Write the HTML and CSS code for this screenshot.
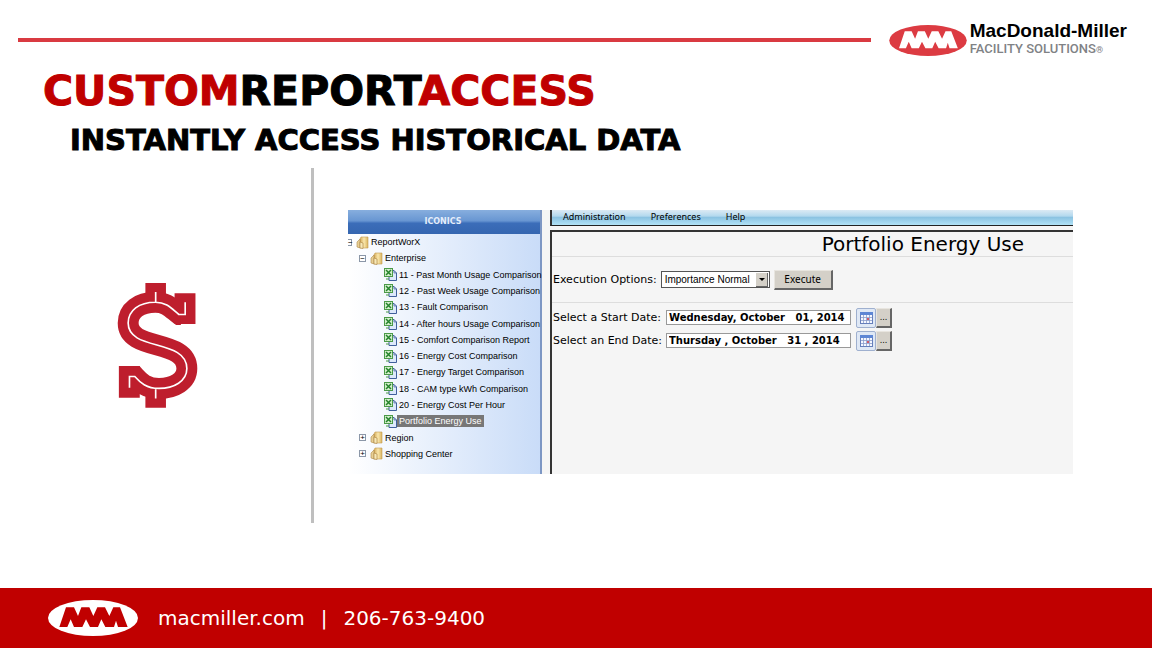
FILE: index.html
```
<!DOCTYPE html>
<html lang="en">
<head>
  <meta charset="UTF-8">
  <meta name="viewport" content="width=device-width, initial-scale=1.0">
  <title>Custom Report Access</title>
  <link rel="stylesheet" href="styles.css">
</head>
<body>
  <!-- Shared icons -->
  <svg class="sprite" aria-hidden="true">
    <defs>
      <linearGradient id="folderFill" x1="0" x2="1">
        <stop offset="0" stop-color="#d2a958"/>
        <stop offset="0.5" stop-color="#fae7ac"/>
        <stop offset="1" stop-color="#d9b45f"/>
      </linearGradient>
    </defs>
    <symbol id="mmm" viewBox="0 0 270 108">
      <ellipse cx="135" cy="54" rx="135" ry="54" fill="currentColor"/>
      <path class="zigzag" d="M34 81L54 22H78L90 48L100 22H124L136 48L148 22H171L184 48L196 22H216L239 81H210L204 62L198 81H172L160 58L150 81H126L114 58L103 81H78L68 58L58 81Z"/>
    </symbol>
    <symbol id="folder" viewBox="0 0 13 13">
      <path d="M5 1H12V12H4V3Z" fill="url(#folderFill)" stroke="#c49b50" stroke-width="0.6"/>
      <path d="M1 6L4 3V12L1 11Z" fill="#e7cf94" stroke="#b08b4a" stroke-width="0.6"/>
      <path d="M4 6L7 7V12.5L4 12Z" fill="#f7e8b8" stroke="#a9823d" stroke-width="0.6"/>
    </symbol>
    <symbol id="sheet" viewBox="0 0 13 13">
      <path d="M5 2.5H10L12.5 5V12.5H5Z" fill="#dce8fb" stroke="#3f5f9c"/>
      <path d="M10 2.5V5H12.5" fill="none" stroke="#3f5f9c" stroke-width="0.7"/>
      <rect x="0.5" y="0.5" width="8" height="8" fill="#d3efcc" stroke="#4b9a48"/>
      <path d="M2 2L7 7M7 2L2 7" stroke="#24832b" stroke-width="1.5"/>
      <path d="M2 11H5" stroke="#4b9a48"/>
    </symbol>
    <symbol id="calendar" viewBox="0 0 13 12">
      <rect x="0.5" y="0.5" width="12" height="11" fill="#f4f7ff" stroke="#667fbb"/>
      <path d="M0 0H13V3H0Z" fill="#5e86d4"/>
      <path d="M1 5.5H12M1 8.5H12M3.5 3V11M6.5 3V11M9.5 3V11" stroke="#8b9dcc" stroke-width="0.8"/>
      <path d="M7 6H9V8H7Z" fill="#d35a68"/>
    </symbol>
  </svg>

  <header class="top">
    <div class="rule"></div>
    <div class="brand">
      <svg class="brand-mark"><use href="#mmm"/></svg>
      <div>
        <div class="brand-name">MacDonald-Miller</div>
        <div class="brand-sub">FACILITY SOLUTIONS<span class="reg">®</span></div>
      </div>
    </div>
  </header>

  <main>
    <h1><span>CUSTOM</span>REPORT<span>ACCESS</span></h1>
    <h2>INSTANTLY ACCESS HISTORICAL DATA</h2>

    <div class="content">
      <div class="symbol">
        <svg class="dollar" viewBox="52 38 243 377" role="img" aria-label="Dollar">
          <path d="M137 38H199V85H137ZM137 370H199V414H137ZM225 69H288V162H225ZM57 288H120V384H57Z" fill="#be1e2d"/>
          <path d="M244 133H240C217 116 202 96 167 96C118 96 85 121 85 159C85 245 262 205 262 296C262 334 223 356 178 356C140 356 121 338 105 320H100" fill="none" stroke="#be1e2d" stroke-width="63"/>
          <path d="M168 65V96M168 356V386M257 96V133H238C217 116 202 96 167 96C118 96 85 121 85 159C85 245 262 205 262 296C262 334 223 356 178 356C140 356 121 338 105 320H89V354" fill="none" stroke="#fff" stroke-width="5"/>
        </svg>
      </div>

      <div class="report">
        <nav class="sidebar">
          <div class="sidebar-head">ICONICS</div>
          <ul class="tree">
            <li class="root"><button class="toggle" aria-label="Collapse">−</button><svg><use href="#folder"/></svg>ReportWorX</li>
            <li class="group"><button class="toggle" aria-label="Collapse">−</button><svg><use href="#folder"/></svg>Enterprise</li>
            <li class="leaf"><svg><use href="#sheet"/></svg><a href="#">11 - Past Month Usage Comparison</a></li>
            <li class="leaf"><svg><use href="#sheet"/></svg><a href="#">12 - Past Week Usage Comparison</a></li>
            <li class="leaf"><svg><use href="#sheet"/></svg><a href="#">13 - Fault Comparison</a></li>
            <li class="leaf"><svg><use href="#sheet"/></svg><a href="#">14 - After hours Usage Comparison</a></li>
            <li class="leaf"><svg><use href="#sheet"/></svg><a href="#">15 - Comfort Comparison Report</a></li>
            <li class="leaf"><svg><use href="#sheet"/></svg><a href="#">16 - Energy Cost Comparison</a></li>
            <li class="leaf"><svg><use href="#sheet"/></svg><a href="#">17 - Energy Target Comparison</a></li>
            <li class="leaf"><svg><use href="#sheet"/></svg><a href="#">18 - CAM type kWh Comparison</a></li>
            <li class="leaf"><svg><use href="#sheet"/></svg><a href="#">20 - Energy Cost Per Hour</a></li>
            <li class="leaf"><svg><use href="#sheet"/></svg><a href="#" class="selected">Portfolio Energy Use</a></li>
            <li class="group"><button class="toggle" aria-label="Expand">+</button><svg><use href="#folder"/></svg>Region</li>
            <li class="group"><button class="toggle" aria-label="Expand">+</button><svg><use href="#folder"/></svg>Shopping Center</li>
          </ul>
        </nav>

        <div class="workspace">
          <nav class="menu">
            <a href="#">Administration</a>
            <a href="#">Preferences</a>
            <a href="#">Help</a>
          </nav>
          <form class="panel">
            <h3>Portfolio Energy Use</h3>
            <div class="row options">
              <label for="priority">Execution Options:</label>
              <span class="select-box">
                <select id="priority"><option>Importance Normal</option></select>
              </span>
              <button type="button" class="execute">Execute</button>
            </div>
            <div class="dates">
              <div class="row">
                <label for="start">Select a Start Date:</label>
                <input type="text" id="start" value="Wednesday, October   01, 2014">
                <div class="pickers">
                  <button type="button" class="pick" aria-label="Open calendar"><svg><use href="#calendar"/></svg></button>
                  <button type="button" class="more">...</button>
                </div>
              </div>
              <div class="row">
                <label for="end">Select an End Date:</label>
                <input type="text" id="end" value="Thursday , October   31 , 2014">
                <div class="pickers">
                  <button type="button" class="pick" aria-label="Open calendar"><svg><use href="#calendar"/></svg></button>
                  <button type="button" class="more">...</button>
                </div>
              </div>
            </div>
          </form>
        </div>
      </div>
    </div>
  </main>

  <footer>
    <svg class="footer-mark"><use href="#mmm"/></svg>
    <a href="#">macmiller.com</a>
    <span>|</span>
    <span>206-763-9400</span>
  </footer>
</body>
</html>
```
FILE: styles.css
```
* {
  box-sizing: border-box;
}
body {
  margin: 0;
  min-height: 100vh;
  display: flex;
  flex-direction: column;
  background: #fff;
  color: #000;
  font-family: "Liberation Sans", Arial, sans-serif;
}
a {
  color: inherit;
  text-decoration: none;
}
button, input, select {
  margin: 0;
  font-family: inherit;
}
.sprite {
  position: absolute;
  width: 0;
  height: 0;
}

/* Header */
.top {
  display: flex;
  align-items: center;
  gap: 18px;
  padding: 20px 25px 0 18px;
}
.rule {
  flex: 1;
  height: 4px;
  background: #d93a41;
}
.brand {
  display: flex;
  align-items: center;
  gap: 3px;
  height: 40px;
}
.brand-mark {
  width: 78px;
  height: 31px;
  color: #dc3b42;
  fill: #fff;
}
.brand-name {
  font-size: 19px;
  line-height: 18px;
  font-weight: bold;
}
.brand-sub {
  font-family: Roboto, sans-serif;
  font-size: 13px;
  line-height: 18px;
  font-weight: 500;
  color: #808285;
}
.reg {
  font-size: 9px;
}

/* Titles */
main {
  flex: 1;
}
h1, h2 {
  margin: 0;
  font-family: "DejaVu Sans", sans-serif;
  font-weight: bold;
  -webkit-text-stroke: 1px currentColor;
}
h1 {
  padding: 10px 0 0 43px;
  font-size: 41px;
  line-height: 42px;
}
h1 span {
  color: #c00000;
}
h2 {
  padding: 12px 0 0 70px;
  font-size: 29px;
  line-height: 32px;
}

/* Content */
.content {
  display: flex;
  align-items: stretch;
  margin-top: 12px;
  min-height: 355px;
}
.symbol {
  flex: 0 0 314px;
  display: flex;
  align-items: center;
  justify-content: center;
  padding-left: 4px;
  border-right: 3px solid #bfbfbf;
}
.dollar {
  width: 81px;
  height: 125px;
}
.report {
  flex: 1;
  align-self: flex-start;
  display: flex;
  gap: 8px;
  min-height: 264px;
  margin: 42px 79px 0 34px;
  background: #f5f5f5;
}

/* Report tree */
.sidebar {
  flex: 0 0 194px;
  min-width: 0;
  display: flex;
  flex-direction: column;
  border-right: 2px solid #7d97c4;
  background: linear-gradient(90deg, #fff, #c9dcf8);
}
.sidebar-head {
  height: 24px;
  padding-right: 2px;
  background: linear-gradient(#87aede, #6896d2 45%, #3b6db9 55%, #3566b0);
  color: #e4edfa;
  font: bold 8px/24px "DejaVu Sans", sans-serif;
  text-align: center;
}
.tree {
  flex: 1;
  display: grid;
  grid-auto-rows: 1fr;
  margin: 0;
  padding: 0 0 12px;
  list-style: none;
  font-size: 9px;
  white-space: nowrap;
}
.tree li {
  display: flex;
  align-items: center;
  gap: 2px;
}
.tree svg {
  flex: none;
  width: 13px;
  height: 13px;
}
.tree .group {
  padding-left: 11px;
}
.tree .leaf {
  padding-left: 36px;
}
.tree .root .toggle {
  width: 4px;
  border-left: 0;
}
.toggle {
  width: 7px;
  height: 7px;
  margin-right: 2px;
  padding: 0;
  border: 1px solid #8b97a8;
  background: #fff;
  font-size: 8px;
  line-height: 5px;
}
.selected {
  margin-left: -2px;
  padding: 1px 2px;
  background: #777;
  color: #fff;
}

/* Report form */
.workspace {
  flex: 1;
  display: flex;
  flex-direction: column;
  gap: 4px;
}
.menu {
  display: flex;
  gap: 25px;
  height: 16px;
  padding-left: 11px;
  border-left: 2px solid #333;
  border-bottom: 1px solid #222;
  background: linear-gradient(#dceaf4, #b4d9ee 40%, #8cc3e2 50%, #b0e2f6);
  font: 9px/14px "Noto Sans", sans-serif;
}
.panel {
  flex: 1;
  border-top: 2px solid #333;
  border-left: 2px solid #333;
  font: 11px "DejaVu Sans", sans-serif;
}
h3 {
  margin: 0;
  padding-right: 49px;
  border-bottom: 1px solid #ddd;
  font-size: 20px;
  line-height: 24px;
  font-weight: normal;
  text-align: right;
}
.row {
  display: flex;
  align-items: center;
  padding-left: 1px;
}
.options {
  gap: 4px;
  height: 46px;
  border-bottom: 1px solid #ddd;
}
.select-box {
  position: relative;
  display: flex;
}
.select-box::before,
.select-box::after {
  content: "";
  position: absolute;
  pointer-events: none;
}
.select-box::before {
  top: 2px;
  right: 2px;
  width: 11px;
  height: 13px;
  border-right: 1px solid #666;
  border-bottom: 1px solid #666;
  background: #d4d0c8;
}
.select-box::after {
  top: 7px;
  right: 5px;
  border: 3px solid transparent;
  border-top-color: #000;
  border-bottom: 0;
}
select {
  width: 109px;
  height: 17px;
  padding: 0 3px;
  appearance: none;
  border: 1px solid #555;
  border-radius: 0;
  background: #fff;
  font: 10px "Liberation Sans", sans-serif;
}
.execute, .more {
  padding: 0;
  border: 1px solid #e8e5df;
  border-right: 2px solid #666;
  border-bottom: 2px solid #666;
  background: #d4d0c8;
}
.execute {
  width: 59px;
  height: 20px;
  font: 10px/16px "Noto Sans", sans-serif;
}
.dates {
  padding-top: 3px;
}
.dates .row {
  height: 23px;
}
.dates label {
  flex: 0 0 113px;
}
.dates input {
  width: 185px;
  height: 15px;
  margin-right: 5px;
  padding: 0 2px;
  border: 1px solid #999;
  background: #fff;
  font-size: 10px;
  font-weight: bold;
}
.pickers {
  display: flex;
}
.pick {
  display: flex;
  align-items: center;
  justify-content: center;
  width: 20px;
  height: 20px;
  padding: 0;
  border: 1px solid #9fb0cf;
  border-radius: 2px;
  background: #dfe8f5;
}
.pick svg {
  width: 13px;
  height: 12px;
}
.more {
  width: 16px;
  height: 20px;
  font-size: 8px;
}

/* Footer */
footer {
  display: flex;
  align-items: center;
  height: 60px;
  padding-left: 48px;
  gap: 16px;
  background: #c00000;
  color: #fff;
  font: 20px "DejaVu Sans", sans-serif;
}
.footer-mark {
  width: 90px;
  height: 36px;
  margin-right: 4px;
  color: #fff;
  fill: #c00000;
}
```
